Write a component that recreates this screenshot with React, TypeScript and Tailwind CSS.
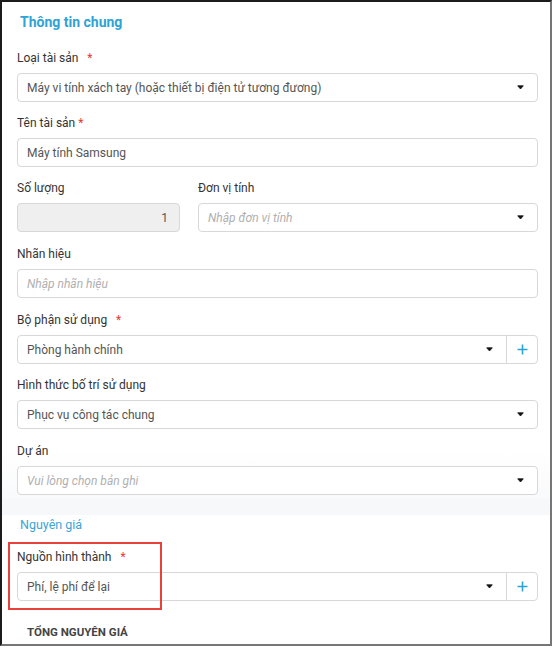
import React from "react";

const Caret: React.FC = () => (
    <svg width="7" height="5" viewBox="0 0 7 5" className="shrink-0">
        <path d="M0.7 0.8 H6.3 L3.5 4 Z" fill="#111" stroke="#111" strokeWidth="0.8" strokeLinejoin="round" />
    </svg>
);

const Plus: React.FC = () => (
    <svg width="11" height="11" viewBox="0 0 11 11">
        <path d="M5.5 0.5 V10.5 M0.5 5.5 H10.5" stroke="#2aa3d8" strokeWidth="1.6" />
    </svg>
);

const Label: React.FC<{ text: string; required?: boolean; wide?: boolean }> = ({ text, required, wide }) => (
    <div className="h-[16px] leading-[16px] text-[12px] text-[#333] whitespace-pre">
        {text}
        {required && <span className="text-[#e53935]">{wide ? "   *" : " *"}</span>}
    </div>
);

const Select: React.FC<{ value?: string; placeholder?: string; plus?: boolean }> = ({ value, placeholder, plus }) => (
    <div className="mt-[7px] h-[29px] flex border border-[#d8d8d8] rounded-[4px] bg-white">
        <div className="flex-1 flex items-center pl-[9px] pr-[13px]">
            {value ? (
                <span className="flex-1 text-[12px] text-[#555] truncate">{value}</span>
            ) : (
                <span className="flex-1 text-[12px] italic text-[#b0b0b0] truncate">{placeholder}</span>
            )}
            <Caret />
        </div>
        {plus && (
            <div className="w-[31px] border-l border-[#d8d8d8] flex items-center justify-center">
                <Plus />
            </div>
        )}
    </div>
);

const TextInput: React.FC<{ value?: string; placeholder?: string }> = ({ value, placeholder }) => (
    <div className="mt-[7px] h-[29px] flex items-center border border-[#d8d8d8] rounded-[4px] bg-white pl-[9px]">
        {value ? (
            <span className="text-[12px] text-[#555]">{value}</span>
        ) : (
            <span className="text-[12px] italic text-[#b0b0b0]">{placeholder}</span>
        )}
    </div>
);

const App: React.FC = () => {
    return (
        <div className="w-[555px] h-[648px] bg-white" style={{ fontFamily: "Roboto, 'Noto Sans', sans-serif" }}>
            <div className="relative w-[552px] h-[646px] border-l-2 border-t-2 border-[#1c1c1c] border-r-2 border-b-2 border-r-[#767676] border-b-[#767676] overflow-hidden">
                {/* Thông tin chung */}
                <div className="pl-[15px] pr-[12px] bg-gradient-to-b from-white from-90% to-[#f9fafb]">
                    <div className="pt-[10px] pl-[3px] h-[30px] leading-[20px] text-[14px] font-bold text-[#2ea3d6]">
                        Thông tin chung
                    </div>
                    <div className="pt-[18px]">
                        <Label text="Loại tài sản" required wide />
                        <Select value="Máy vi tính xách tay (hoặc thiết bị điện tử tương đương)" />
                    </div>
                    <div className="pt-[13px]">
                        <Label text="Tên tài sản" required />
                        <TextInput value="Máy tính Samsung" />
                    </div>
                    <div className="pt-[13px] flex gap-[18px]">
                        <div className="w-[163px]">
                            <Label text="Số lượng" />
                            <div className="mt-[7px] h-[29px] flex items-center justify-end border border-[#d8d8d8] rounded-[4px] bg-[#efefef] pr-[11px] text-[12px] text-[#555]">
                                1
                            </div>
                        </div>
                        <div className="flex-1">
                            <Label text="Đơn vị tính" />
                            <Select placeholder="Nhập đơn vị tính" />
                        </div>
                    </div>
                    <div className="pt-[14px]">
                        <Label text="Nhãn hiệu" />
                        <TextInput placeholder="Nhập nhãn hiệu" />
                    </div>
                    <div className="pt-[14px]">
                        <Label text="Bộ phận sử dụng" required wide />
                        <Select value="Phòng hành chính" plus />
                    </div>
                    <div className="pt-[13px]">
                        <Label text="Hình thức bố trí sử dụng" />
                        <Select value="Phục vụ công tác chung" />
                    </div>
                    <div className="pt-[14px] pb-[4px]">
                        <Label text="Dự án" />
                        <Select placeholder="Vui lòng chọn bản ghi" />
                    </div>
                </div>
                <div className="h-[16px] bg-[#f7f8fa]" />

                {/* Nguyên giá */}
                <div className="pl-[15px] pr-[12px] bg-white">
                    <div className="pt-[1px] pl-[3px] h-[19px] leading-[18px] text-[12.5px] text-[#3aa5d6]">Nguyên giá</div>
                    <div className="pt-[15px]">
                        <Label text="Nguồn hình thành" required wide />
                        <Select value="Phí, lệ phí để lại" plus />
                    </div>
                    <div className="pt-[23px] pl-[10px] leading-[16px] text-[11.5px] font-bold text-[#444]">
                        TỔNG NGUYÊN GIÁ
                    </div>
                </div>

                {/* highlight box */}
                <div className="absolute left-[6px] top-[540px] w-[154px] h-[68px] border-2 border-[#e8413c]" />
            </div>
        </div>
    );
};

export default App;
